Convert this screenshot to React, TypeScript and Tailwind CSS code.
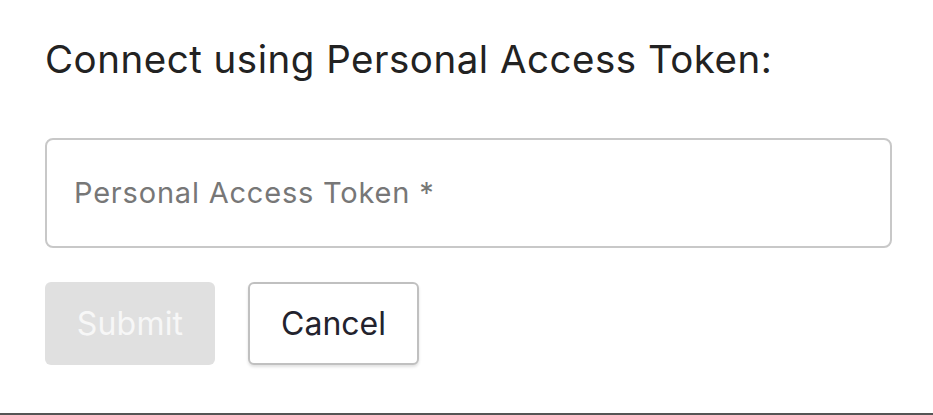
import React from "react";

export default function App() {
  return (
    <div
      className="w-[933px] h-[415px] bg-white border-b-2 border-[#555555] box-border pl-[45px] pr-[41px] pt-[35px]"
      style={{ fontFamily: "Inter, 'Noto Sans', sans-serif" }}
    >
      <h1 className="text-[38.5px] leading-[48px] text-[#222222] font-normal tracking-[0.5px] h-[48px]">
        Connect using Personal Access Token:
      </h1>
      <div className="mt-[55px] h-[110px] w-[847px] border-2 border-[#c8c8c8] rounded-[8px] flex items-center pl-[27px]">
        <span className="text-[29px] text-[#777777] tracking-[0.8px]">Personal Access Token *</span>
      </div>
      <div className="mt-[34px] flex gap-[33px]">
        <button className="w-[170px] h-[83px] rounded-[6px] bg-[#e0e0e0] text-[32px] tracking-[0.2px] text-[#f7f7f7]">
          Submit
        </button>
        <button className="w-[171px] h-[83px] rounded-[6px] bg-white border-2 border-[#c0c0c0] shadow-[0_2px_3px_rgba(0,0,0,0.12)] text-[32px] tracking-[0px] text-[#23232e]">
          Cancel
        </button>
      </div>
    </div>
  );
}
